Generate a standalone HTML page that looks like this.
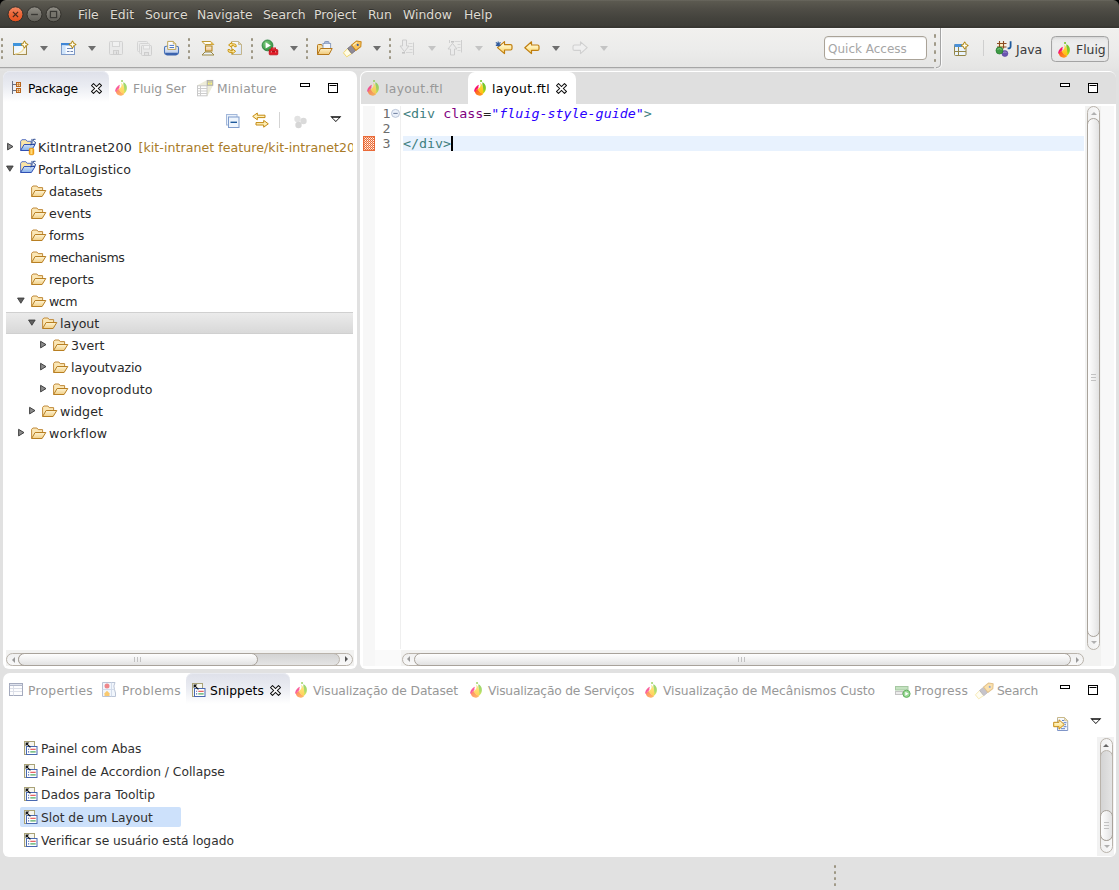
<!DOCTYPE html>
<html lang="en">
<head>
<meta charset="utf-8">
<title>Eclipse - layout.ftl</title>
<style>
html,body{margin:0;padding:0}
body{width:1119px;height:890px;overflow:hidden;position:relative;background:#e1e1e1;
  font-family:"DejaVu Sans","Liberation Sans",sans-serif;font-size:12.3px;color:#222;}
*{box-sizing:border-box}
.a{position:absolute;white-space:nowrap}
svg{position:absolute;overflow:visible}

/* ---------- title / menu bar ---------- */
#corner{left:0;top:0;width:1119px;height:10px;background:#000}
#title{left:0;top:0;width:1119px;height:28px;border-radius:6px 6px 0 0;
  background:linear-gradient(#6b6960 0,#5b5950 1.500px,#4f4d46 9px,#44433d 18px,#3e3d38 26px,#34332e 27px,#3a3934 28px)}
#title .m{top:7px;color:#dfdbd2;font-size:12.4px;line-height:16px;text-shadow:0 -1px 0 rgba(0,0,0,.35)}
.wb{top:6.500px;width:16px;height:16px;border-radius:50%;border:1px solid #33312c;box-shadow:0 1px 0 rgba(255,255,255,.08)}

/* ---------- tool bar ---------- */
#tb{left:0;top:28px;width:1119px;height:43px;background:linear-gradient(#fafafa 0,#f1f0ee 1.500px,#ececeb 50%,#e5e5e4 92%,#e2e2e2)}
#tbline{left:0;top:67px;width:934px;height:2px;background:linear-gradient(#a6a6a6 0,#a6a6a6 50%,#d6d6d6 50%,#d6d6d6 100%)}
.sep{width:2px;height:22px;top:37.500px;background:repeating-linear-gradient(#b8b3a7 0,#99937f 1.5px,#b0aa9d 3px,transparent 3.2px,transparent 6.1px)}
.dd{width:0;height:0;border-left:4px solid transparent;border-right:4px solid transparent;border-top:5px solid #6e6e6e;top:46px}
.dd.dis{border-top-color:#c4c4c4}

/* ---------- panels ---------- */
.panel{background:#fff;border-radius:7px 7px 6px 6px}
.tab{font-size:12.3px;line-height:16px;margin-top:1px;color:#989898}
.tab.act{color:#000}
.ui{font-size:12.25px;line-height:16px;margin-top:1px;color:#303030}
.tree{font-size:12.6px;line-height:16px;margin-top:1px;color:#2a2a2a}
.code{font-family:"DejaVu Sans Mono","Liberation Mono",monospace;font-size:13.33px;line-height:15px;transform:scaleY(.9);transform-origin:0 12.100px}

/* tree + misc */
.tw{width:9px;height:10px}
.fo{width:16px;height:14px}
.sbtrack{background:#f2f2f1}
.sbh{border:1px solid #b9b3ab;border-radius:7px;background:linear-gradient(#f1f1f1,#f8f8f8)}
.sbthumb{border:1px solid #a8a29a;border-radius:7px;background:linear-gradient(#fefefe,#f1f1f1 50%,#e2e2e2)}
.sbv{border:1px solid #b9b3ab;border-radius:7px;background:linear-gradient(90deg,#f1f1f1,#f8f8f8)}
.sbthumbv{border:1px solid #a8a29a;border-radius:7px;background:linear-gradient(90deg,#fefefe,#f1f1f1 50%,#e2e2e2)}
.grip-h{width:7px;height:5px;background:repeating-linear-gradient(90deg,#c2c2c2 0,#c2c2c2 1px,transparent 1px,transparent 3px)}
.grip-v{width:5px;height:7px;background:repeating-linear-gradient(#c2c2c2 0,#c2c2c2 1px,transparent 1px,transparent 3px)}
.arl{width:0;height:0;border-top:3px solid transparent;border-bottom:3px solid transparent;border-right:3.500px solid #9a9a9a}
.arr{width:0;height:0;border-top:3px solid transparent;border-bottom:3px solid transparent;border-left:3.500px solid #9a9a9a}
.aru{width:0;height:0;border-left:3px solid transparent;border-right:3px solid transparent;border-bottom:3.500px solid #b0b0b0}
.ard{width:0;height:0;border-left:3px solid transparent;border-right:3px solid transparent;border-top:3.500px solid #b0b0b0}
.trh{border:1px solid #b9b3ab;border-radius:7px;background:linear-gradient(#d4d4d4,#e4e4e4)}
.trv{border:1px solid #b9b3ab;border-radius:7px;background:linear-gradient(90deg,#d4d4d4,#e4e4e4)}
.dk.arr{border-left-color:#555}.dk.aru{border-bottom-color:#666}
</style>
</head>
<body>

<svg width="0" height="0" style="left:0;top:0">
  <symbol id="closex" viewBox="0 0 11 11">
    <path d="M.6 2.500L2.500.6l3 3 3-3 1.900 1.900-3 3 3 3-1.900 1.900-3-3-3 3L.6 8.500l3-3z" fill="#fff" stroke="#111" stroke-width="1.050" stroke-linejoin="miter"/>
  </symbol>
  <symbol id="twc" viewBox="0 0 9 10"><path d="M.6 1.300L6 4.600.6 7.900z" fill="#8c8c8c" stroke="#333" stroke-width=".9" stroke-linejoin="round"/></symbol>
  <symbol id="two" viewBox="0 0 10 9"><path d="M.6 1.200h7.400L4.300 7z" fill="#606060" stroke="#333" stroke-width=".9" stroke-linejoin="round"/></symbol>
  <symbol id="fold" viewBox="0 0 16 14">
    <linearGradient id="gF2" x1="0" y1="0" x2="0" y2="1"><stop offset="0" stop-color="#fef4d4"/><stop offset="1" stop-color="#f1cf86"/></linearGradient>
    <path d="M.6 12.400V3.300L1.900 2h4l1.300 1.600h4.400v3" fill="#fbe7b6" stroke="#c08a3a" stroke-width="1" stroke-linejoin="round"/>
    <path d="M.6 12.500l3.500-6h10.700l-3.700 6z" fill="url(#gF2)" stroke="#b87f22" stroke-width="1" stroke-linejoin="round"/>
  </symbol>
  <symbol id="prj" viewBox="0 0 18 18">
    <linearGradient id="gPj" x1="0" y1="0" x2="0" y2="1"><stop offset="0" stop-color="#cfe0f8"/><stop offset="1" stop-color="#86b0e8"/></linearGradient>
    <path d="M1.600 12.400V3.300L2.900 1.700h4l1.300 1.600h3.900v3.200" fill="#fbe5a6" stroke="#5a74c4" stroke-width="1" stroke-linejoin="round"/>
    <path d="M1.600 12.500l3.500-6h11l-3.700 6z" fill="url(#gPj)" stroke="#3050b4" stroke-width="1" stroke-linejoin="round"/>
    <path d="M13 .9v4.600q0 1.500-1.500 1.500" fill="none" stroke="#1f3f8a" stroke-width="1"/>
    <path d="M16.500 1.400q-2.400-.8-2.400.8 0 .9 1.200 1.300 1.300.4 1.200 1.600-.2 1.500-2.500 1" fill="none" stroke="#1f3f8a" stroke-width=".95"/>
  </symbol>
  <symbol id="prjK" viewBox="0 0 18 18">
    <use href="#prj"/>
    <linearGradient id="gCy" x1="0" y1="0" x2="1" y2="0"><stop offset="0" stop-color="#f59a00"/><stop offset=".45" stop-color="#ffe08a"/><stop offset="1" stop-color="#f59a00"/></linearGradient>
    <rect x="10.300" y="10.300" width="4.400" height="6.400" rx="1.200" fill="url(#gCy)" stroke="#e58f00" stroke-width=".9"/>
  </symbol>
  <symbol id="snip" viewBox="0 0 14 14">
    <rect x=".5" y=".5" width="10" height="13" fill="#f6f6ee" stroke="#a9a277" stroke-width="1"/>
    <rect x="2.500" y="5.500" width="10.500" height="8" fill="#fff" stroke="#4868b0" stroke-width="1"/>
    <path d="M6.300 8.300h5.400" stroke="#e0484a" stroke-width="1.100"/>
    <path d="M6.300 10.900h5.400" stroke="#38a04c" stroke-width="1.100"/>
    <path d="M4 8.300h1.200M4 10.900h1.200" stroke="#4868b0" stroke-width="1.100"/>
    <path d="M2.800 2.800l3.600 3.600" stroke="#111" stroke-width="1.150"/>
    <path d="M1.600 1.600h3.700l-3.700 3.700z" fill="#111"/>
  </symbol>
  <symbol id="fluig" viewBox="0 0 12 16">
    <linearGradient id="fgO" x1="0" y1="0" x2="1" y2="1"><stop offset="0" stop-color="#ff4a24"/><stop offset="1" stop-color="#ffa81c"/></linearGradient>
    <linearGradient id="fgG" x1="0" y1="0" x2="0" y2="1"><stop offset="0" stop-color="#6cc22c"/><stop offset=".6" stop-color="#86cc24"/><stop offset="1" stop-color="#d6e400"/></linearGradient>
    <linearGradient id="fgY" x1="0" y1="0" x2="0" y2="1"><stop offset="0" stop-color="#ffdc50"/><stop offset="1" stop-color="#ffbe0a"/></linearGradient>
    <path d="M8.300 2.200C10.500 3 12 5.300 11.900 8 11.800 10.800 10.600 12.700 8.800 13.900 8.600 11.600 8.600 9.400 8.500 7.400 8.400 5.600 8.400 3.600 8.300 2.200z" fill="url(#fgG)"/>
    <path d="M.8 11.300C2 10 3.200 9.300 4 9 4.800 11 6.600 13 9 13.600 9.200 14.500 8.300 15.400 6.200 15.700 3.300 15.900.9 14 .8 11.300z" fill="url(#fgO)"/>
    <path d="M5.800 2.600C7.500 3.800 8.800 5.600 9.100 8 9.400 10 9.400 12 9 13.800 6.400 13.300 4.300 11 3.800 9.100 4.700 8.300 6.500 7.200 6.600 5.200 6.600 4.200 6.200 3.400 5.800 2.600z" fill="url(#fgY)"/>
    <path d="M5 4.800C3 5.500.4 8 .1 11 .2 11.700.8 12 1.200 11.600 2.200 10 3.400 9 4.400 8 4.200 7 4.400 5.800 5 4.800z" fill="#f8126c"/>
    <circle cx="7.050" cy="1.050" r="1.050" fill="#76c428"/>
  </symbol>
</svg>
<!-- ================= TITLE BAR ================= -->
<div class="a" id="corner"></div>
<div class="a" id="title">
  <svg style="left:0;top:0" width="70" height="28" viewBox="0 0 70 28">
    <defs>
      <linearGradient id="wbR" x1="0" y1="0" x2="0" y2="1"><stop offset="0" stop-color="#f28c68"/><stop offset=".5" stop-color="#ec6536"/><stop offset="1" stop-color="#e5501e"/></linearGradient>
      <linearGradient id="wbG" x1="0" y1="0" x2="0" y2="1"><stop offset="0" stop-color="#918f87"/><stop offset=".5" stop-color="#77756e"/><stop offset="1" stop-color="#5f5e57"/></linearGradient>
    </defs>
    <circle cx="15.500" cy="14.300" r="7.500" fill="url(#wbR)" stroke="#33312c" stroke-width="1"/>
    <circle cx="34.500" cy="14.300" r="7.500" fill="url(#wbG)" stroke="#33312c" stroke-width="1"/>
    <circle cx="53.500" cy="14.300" r="7.500" fill="url(#wbG)" stroke="#33312c" stroke-width="1"/>
    <path d="M12.900 11.800l5.200 5.200M18.100 11.800l-5.200 5.200" stroke="#4a2a1c" stroke-width="1.150" fill="none"/>
    <path d="M31.100 14.500h6.800" stroke="#3a3935" stroke-width="1.350" fill="none"/>
    <rect x="50.400" y="11.400" width="6.200" height="6.200" stroke="#3a3935" stroke-width="1.250" fill="#77756d"/>
  </svg>
  <span class="a m" style="left:78px">File</span>
  <span class="a m" style="left:110px">Edit</span>
  <span class="a m" style="left:145px">Source</span>
  <span class="a m" style="left:197px">Navigate</span>
  <span class="a m" style="left:263px">Search</span>
  <span class="a m" style="left:314px">Project</span>
  <span class="a m" style="left:368px">Run</span>
  <span class="a m" style="left:403px">Window</span>
  <span class="a m" style="left:464px">Help</span>
</div>

<!-- ================= TOOL BAR ================= -->
<div class="a" id="tb"></div>
<div class="a" id="tbline"></div>
<!--TB-START-->
<!-- grip -->
<div class="a sep" style="left:1px"></div>
<!-- New -->
<svg style="left:12px;top:40px" width="16" height="16" viewBox="0 0 16 16">
  <defs>
    <linearGradient id="gWin" x1="0" y1="0" x2="1" y2="1"><stop offset="0" stop-color="#e4f1fd"/><stop offset=".6" stop-color="#f7fbff"/><stop offset="1" stop-color="#f4e9c6"/></linearGradient>
    <linearGradient id="gGold" x1="0" y1="0" x2="0" y2="1"><stop offset="0" stop-color="#fffdf0"/><stop offset=".45" stop-color="#fff0b4"/><stop offset="1" stop-color="#fbcf5c"/></linearGradient>
    <linearGradient id="gFold" x1="0" y1="0" x2="0" y2="1"><stop offset="0" stop-color="#fdf0c8"/><stop offset="1" stop-color="#f0c878"/></linearGradient>
    <linearGradient id="gPage" x1="0" y1="0" x2="1" y2="1"><stop offset="0" stop-color="#ffffff"/><stop offset="1" stop-color="#d6e2f3"/></linearGradient>
    <radialGradient id="gRun" cx=".4" cy=".35" r=".7"><stop offset="0" stop-color="#7fd07f"/><stop offset="1" stop-color="#2c8a3a"/></radialGradient>
    <radialGradient id="gFl" cx=".5" cy=".7" r=".7"><stop offset="0" stop-color="#ffe14a"/><stop offset=".5" stop-color="#f9a13a"/><stop offset="1" stop-color="#f0508a"/></radialGradient>
  </defs>
  <rect x="1.500" y="3.500" width="13" height="11" fill="url(#gWin)" stroke="#a38c4e"/>
  <rect x="1" y="3" width="9" height="3" fill="#3f94dc"/>
  <path d="M3 14c5-.4 8.6-3 9.4-7.5" stroke="#f0dc9c" stroke-width="1.4" fill="none"/>
  <path d="M12.500 1.200q.9 2.400 3.300 3.300-2.400.9-3.300 3.300-.9-2.400-3.300-3.300 2.400-.9 3.300-3.300z" fill="#c9a02c" stroke="#b48a18" stroke-width="1.300" stroke-linejoin="round"/><path d="M12.500 2.300v4.400M10.300 4.500h4.400" stroke="#fffdf0" stroke-width="1.300"/>
</svg>
<div class="a dd" style="left:40px"></div>
<!-- New wizard 2 -->
<svg style="left:60px;top:40px" width="16" height="16" viewBox="0 0 16 16">
  <rect x="1.500" y="3.500" width="13" height="11" fill="#f6faff" stroke="#7f9bc8"/>
  <rect x="1" y="3" width="14" height="2.400" fill="#3f86d6"/>
  <rect x="2" y="5.400" width="3.600" height="8.600" fill="#cfe4fa"/>
  <path d="M7 8.500h6M7 11.500h2.500M10.500 11.500h2.500" stroke="#6f86b4" stroke-width="1.200"/>
  <path d="M12.500 1.200q.9 2.400 3.300 3.300-2.400.9-3.300 3.300-.9-2.400-3.300-3.300 2.400-.9 3.300-3.300z" fill="#c9a02c" stroke="#b48a18" stroke-width="1.300" stroke-linejoin="round"/><path d="M12.500 2.300v4.400M10.300 4.500h4.400" stroke="#fffdf0" stroke-width="1.300"/>
</svg>
<div class="a dd" style="left:88px"></div>
<!-- Save (disabled) -->
<svg style="left:108px;top:40px" width="16" height="16" viewBox="0 0 16 16" opacity=".9">
  <path d="M2.500 1.500h11q1 0 1 1v11q0 1-1 1h-11q-1 0-1-1v-11q0-1 1-1z" fill="#eaeaea" stroke="#cfcfcf"/>
  <rect x="4.500" y="1.500" width="7" height="5" fill="#f2f2f2" stroke="#d4d4d4"/>
  <rect x="5.500" y="10.500" width="5" height="4" fill="#e2e2e2" stroke="#cccccc"/>
  <path d="M8.500 11.500v2.500" stroke="#c6c6c6"/>
</svg>
<!-- Save all (disabled) -->
<svg style="left:136px;top:40px" width="16" height="16" viewBox="0 0 16 16" opacity=".9">
  <rect x="1.500" y="1.500" width="10" height="10" rx="1" fill="#ececec" stroke="#d2d2d2"/>
  <rect x="3.500" y="3.500" width="10" height="10" rx="1" fill="#ececec" stroke="#d2d2d2"/>
  <rect x="5.500" y="5.500" width="10" height="10" rx="1" fill="#e9e9e9" stroke="#cdcdcd"/>
  <rect x="7.500" y="5.500" width="6" height="3.500" fill="#f2f2f2" stroke="#d6d6d6"/>
  <rect x="8.500" y="12.500" width="4" height="3" fill="#e0e0e0" stroke="#cacaca"/>
</svg>
<!-- Print -->
<svg style="left:163px;top:40px" width="17" height="16" viewBox="0 0 17 16">
  <defs><linearGradient id="gPr" x1="0" y1="0" x2="0" y2="1"><stop offset="0" stop-color="#eef2fa"/><stop offset="1" stop-color="#b4c6e6"/></linearGradient></defs>
  <rect x="1.500" y="6.300" width="14" height="8" rx="1.800" fill="url(#gPr)" stroke="#4a74ba" stroke-width="1.100"/>
  <path d="M2.200 12.800h12.600v.6q0 2.100-2.100 2.100h-8.400q-2.100 0-2.100-2.100z" fill="#3b63ae"/>
  <path d="M4.700 9.400v-8h5.600l2.500 2.400v5.600z" fill="#fcfcfd" stroke="#bda458" stroke-width="1"/>
  <path d="M10.300 1.400v2.400h2.500" fill="#f0e4bc" stroke="#bda458" stroke-width=".8"/>
  <path d="M6.500 5.400h4.600M6.500 7.500h4.600" stroke="#4a78c8" stroke-width="1"/>
</svg>
<div class="a sep" style="left:188px"></div>
<!-- toggle block selection-ish icon -->
<svg style="left:201px;top:40px" width="14" height="16" viewBox="0 0 14 16">
  <defs><linearGradient id="gOr" x1="0" y1="0" x2="0" y2="1"><stop offset="0" stop-color="#fff3e0"/><stop offset="1" stop-color="#ecc08a"/></linearGradient></defs>
  <path d="M1 1.500h8.800l3 3h-8.800z" fill="#fffdf4" stroke="#c09a34" stroke-width="1"/>
  <path d="M9.800 1.500v3h3z" fill="#e3b64c"/>
  <path d="M4.500 4.600v1.400M4.500 11.200v.8" stroke="#d8c48c" stroke-width="1"/>
  <rect x="4.500" y="6" width="6.500" height="5" fill="url(#gOr)" stroke="#b58a28" stroke-width="1.100"/>
  <path d="M4 12l-3 3h12l-3-3z" fill="#eaf2fc" stroke="#9a8740" stroke-width="1"/>
</svg>
<!-- refresh page icon -->
<svg style="left:227px;top:40px" width="16" height="16" viewBox="0 0 16 16">
  <path d="M4.500 1.500h7l3 3v10h-10z" fill="url(#gPage)" stroke="#c3b48a" stroke-width="1"/>
  <path d="M11.500 1.500v3h3z" fill="#ead9a4" stroke="#c3b48a" stroke-width=".8"/>
  <path d="M1.600 5l3.200-2.600v1.500h2.400q2 0 2 2v.8h-1.900v-.4q0-.7-.7-.7h-1.800v1.800z" fill="#ffe9a0" stroke="#c8940f" stroke-width="1" stroke-linejoin="round"/>
  <path d="M8.600 11.300l-3.200 2.600v-1.500h-2.400q-2 0-2-2v-.8h1.900v.4q0 .7.700.7h1.800v-1.800z" fill="#ffe9a0" stroke="#c8940f" stroke-width="1" stroke-linejoin="round"/>
</svg>
<div class="a sep" style="left:251px"></div>
<!-- Run external tools -->
<svg style="left:261px;top:39px" width="18" height="17" viewBox="0 0 18 17">
  <circle cx="6.500" cy="6.400" r="5.400" fill="url(#gRun)" stroke="#2a8340" stroke-width=".9"/>
  <path d="M4.600 3.200l5.200 3.200-5.200 3.200z" fill="#fff"/>
  <rect x="8.200" y="10.600" width="8.600" height="5.200" rx=".8" fill="#e21a26" stroke="#c0101a" stroke-width=".8"/>
  <path d="M10.600 10.500v-1.400h3.800v1.400" fill="none" stroke="#d8141e" stroke-width="1.200"/>
  <path d="M8.400 12.600h8.200" stroke="#9a0c14" stroke-width=".8"/>
  <path d="M10.300 12v1.600M14.700 12v1.600" stroke="#ff9a9a" stroke-width=".9"/>
</svg>
<div class="a dd" style="left:290px"></div>
<div class="a sep" style="left:306px"></div>
<!-- Open type folder -->
<svg style="left:316px;top:40px" width="17" height="16" viewBox="0 0 17 16">
  <path d="M1.500 14.500v-9q0-1 1-1h3l1 1.500h6v2.500" fill="#f7dc9c" stroke="#b5771a"/>
  <rect x="7" y="3.500" width="7.600" height="6" fill="#f3f6fb" stroke="#8c9fc0"/>
  <path d="M8.600 3.400v-1.200q0-.7.700-.7h3q.7 0 .7.700v1.200" fill="#a9b9d8" stroke="#7f92b8" stroke-width=".9"/>
  <path d="M1.500 14.500l3-6h11.700l-3.200 6z" fill="url(#gFold)" stroke="#b5771a"/>
</svg>
<!-- Search flashlight -->
<svg style="left:344px;top:40px" width="18" height="16" viewBox="0 0 18 16">
  <g transform="translate(9.200 8.200) rotate(-39)">
    <path d="M-10.500-2.600L-4.500-3.200V3.200L-10.500 2.600z" fill="#fffce6" stroke="#f1d66a" stroke-width=".9"/>
    <rect x="-4.500" y="-3.300" width="5.200" height="6.600" fill="#8f8b98" stroke="#6f6b78" stroke-width=".8"/>
    <path d="M.7-3.500H7L10.200 0 7 3.500H.7z" fill="#f9c45e" stroke="#c8861a" stroke-width="1" stroke-linejoin="round"/>
    <path d="M1.500-2.200H6.800" stroke="#fdeab0" stroke-width="1.200"/>
    <circle cx="5.600" cy=".3" r="1.050" fill="#2f58a8"/>
  </g>
</svg>
<div class="a dd" style="left:373px"></div>
<div class="a sep" style="left:389px"></div>
<!-- Next annotation (disabled) -->
<svg style="left:399px;top:39px" width="16" height="17" viewBox="0 0 16 17">
  <path d="M14.500 3.500v12.500" stroke="#cfcfcf"/>
  <path d="M9.500 4.500h4M10.500 7.500h3M10.500 10.500h3M7 13.500h6.500" stroke="#d6d6d6"/>
  <path d="M3.500 1v6h-2.500l4.500 5.600 4.500-5.600h-2.500v-6z" fill="#ebebeb" stroke="#cdcdcd"/>
  <rect x="3" y="13" width="3" height="1.600" fill="#c4c4c4"/>
</svg>
<div class="a dd dis" style="left:428px"></div>
<!-- Prev annotation (disabled) -->
<svg style="left:447px;top:39px" width="16" height="17" viewBox="0 0 16 17">
  <path d="M2.500 1v3M14.500 1v12.500" stroke="#cfcfcf"/>
  <path d="M7.500 2.500h6M10.500 5.500h3M10.500 8.500h3M10.500 11.500h3" stroke="#d6d6d6"/>
  <rect x="4" y="2" width="3" height="1.600" fill="#c4c4c4"/>
  <path d="M3.500 16v-6h-2.500l4.500-5.600 4.500 5.600h-2.500v6z" fill="#ebebeb" stroke="#cdcdcd"/>
</svg>
<div class="a dd dis" style="left:475px"></div>
<!-- Last edit location -->
<svg style="left:495px;top:40px" width="18" height="16" viewBox="0 0 18 16">
  <path d="M9.500 1.600v3h6q1.500 0 1.500 1.500v2.400q0 1.500-1.500 1.500h-6v3.600l-7-6z" fill="url(#gGold)" stroke="#c07f10" stroke-width="1.200" stroke-linejoin="round"/>
  <path d="M3.200 1.400v5.200M.8 2.600l4.800 2.800M5.600 2.600l-4.800 2.800" stroke="#2f5a9c" stroke-width="1.100"/>
</svg>
<!-- Back -->
<svg style="left:524px;top:41px" width="16" height="14" viewBox="0 0 16 14">
  <path d="M7.500.8v3.200h6q1.500 0 1.500 1.500v2.400q0 1.500-1.500 1.500h-6v3.200l-6.700-5.900z" fill="url(#gGold)" stroke="#c07f10" stroke-width="1.200" stroke-linejoin="round"/>
</svg>
<div class="a dd" style="left:552px"></div>
<!-- Forward (disabled) -->
<svg style="left:572px;top:41px" width="16" height="14" viewBox="0 0 16 14">
  <path d="M8.500.8v3.200h-6q-1.500 0-1.500 1.500v2.400q0 1.500 1.500 1.500h6v3.200l6.700-5.900z" fill="#efefef" stroke="#d0d0d0" stroke-width="1.100" stroke-linejoin="round"/>
</svg>
<div class="a dd dis" style="left:600px"></div>

<!-- Quick Access -->
<div class="a" style="left:823.500px;top:36px;width:103.500px;height:24px;border:1px solid #aaa398;border-radius:4px;background:#fff;box-shadow:inset 0 1px 1px rgba(0,0,0,.08)"></div>
<span class="a" style="left:828px;top:41px;font-size:12px;line-height:16px;color:#a6a6a6">Quick Access</span>
<div class="a" style="left:934px;top:34px;width:2px;height:29px;background:repeating-linear-gradient(#b8b3a7 0,#99937f 1.700px,#b0aa9d 3.500px,transparent 3.700px,transparent 8.200px)"></div>
<svg style="left:930px;top:28px" width="14" height="42" viewBox="0 0 14 42"><path d="M11.500 0v36.500q0 3.500-3.500 3.500h-1" fill="none" stroke="#fbfbfb" stroke-width="1"/><path d="M10.500 0v36q0 3.500-3.500 3.500h-1" fill="none" stroke="#a4a4a4" stroke-width="1"/></svg>
<!-- Open perspective -->
<svg style="left:953px;top:41px" width="17" height="16" viewBox="0 0 17 16">
  <rect x="1.500" y="3.500" width="11.500" height="11" rx="1" fill="#eaf4fd" stroke="#948548"/>
  <rect x="1.500" y="3" width="8" height="3" fill="#4a90d8"/>
  <path d="M5.500 6v8.500M1.500 10.500h11.500" stroke="#948548" stroke-width="1"/>
  <path d="M11.700 1.200q.9 2.400 3.300 3.300-2.400.9-3.300 3.300-.9-2.400-3.300-3.300 2.400-.9 3.300-3.300z" fill="#c9a02c" stroke="#b48a18" stroke-width="1.300" stroke-linejoin="round"/><path d="M11.700 2.300v4.400M9.500 4.500h4.400" stroke="#fffdf0" stroke-width="1.300"/>
</svg>
<div class="a" style="left:983px;top:40px;width:1px;height:16px;background:#cfcfcf"></div>
<!-- Java perspective -->
<svg style="left:995px;top:40px" width="18" height="17" viewBox="0 0 18 17">
  <rect x="3.500" y="2.500" width="6" height="5.500" fill="#fff0c0"/>
  <path d="M2 3.500h9.500M2 7h9.500M4.500 1v7.500M8.500 1v7.500" stroke="#8c4a22" stroke-width="1.100" fill="none"/>
  <circle cx="9.900" cy="13.500" r="3" fill="#6a55b0" stroke="#5440a0" stroke-width=".6"/>
  <path d="M8 12.500q2-1 3.600 0" stroke="#9a8ad0" stroke-width=".9" fill="none"/>
  <circle cx="4.500" cy="10.500" r="3.500" fill="#3f9a45" stroke="#1f7a2c" stroke-width=".7"/>
  <path d="M2.400 9.300q2.100-1.300 4.200 0" stroke="#8fd08f" stroke-width="1" fill="none"/>
  <path d="M15.600 1.200v5q0 2.200-2.200 2.200h-.8" fill="none" stroke="#1f5a9c" stroke-width="1.800"/>
</svg>
<span class="a" style="left:1016px;top:41.500px;font-size:12.4px;line-height:16px;color:#3a3a3a">Java</span>
<!-- Fluig button -->
<div class="a" style="left:1050.500px;top:36px;width:58.500px;height:25.500px;border:1px solid #a3a3a3;border-radius:4.500px;background:linear-gradient(#e6e6e6,#ededed 30%,#e7e7e7);box-shadow:inset 0 1px 2px rgba(0,0,0,.08)"></div>
<svg style="left:1058px;top:42px" width="12" height="16" viewBox="0 0 12 16"><use href="#fluig"/></svg>
<span class="a" style="left:1076px;top:42px;font-size:12.4px;line-height:16px;color:#3a3a3a">Fluig</span>
<!--TB-END-->

<!-- ================= LEFT PANEL ================= -->
<div class="a panel" id="left" style="left:3px;top:71px;width:354px;height:598px"></div>
<!--LEFT-START-->
<!-- active tab: Package -->
<div class="a" style="left:3px;top:71px;width:106px;height:33px;border-radius:7px 7px 0 0;background:linear-gradient(#dee0e9,#eaecf2 45%,#fff 94%);box-shadow:inset 0 1px 0 #e9ebf1"></div>
<svg style="left:11px;top:81px" width="11" height="13" viewBox="0 0 11 13">
  <path d="M1.500 0v13M1.500 3.500h4M1.500 9.500h4" stroke="#6b7182" stroke-width="1"/>
  <rect x="5" y="1" width="5" height="5" fill="#b8641c"/>
  <rect x="5" y="7" width="5" height="5" fill="#b8641c"/>
  <path d="M6 2h1.200v1.200h-1.200zM7.800 2h1.200v1.200h-1.200zM6 3.800h1.200v1.200h-1.200zM7.800 3.800h1.200v1.200h-1.200zM6 8h1.200v1.200h-1.200zM7.800 8h1.200v1.200h-1.200zM6 9.800h1.200v1.200h-1.200zM7.800 9.800h1.200v1.200h-1.200z" fill="#f6dcae"/>
</svg>
<span class="a tab act" style="left:28px;top:80px;letter-spacing:-0.14px">Package</span>
<svg class="x" style="left:91px;top:83px" width="11" height="11" viewBox="0 0 11 11"><use href="#closex"/></svg>
<svg style="left:115px;top:80px" width="12" height="16" viewBox="0 0 12 16" opacity=".68"><use href="#fluig"/></svg>
<span class="a tab" style="left:133px;top:80px;letter-spacing:-0.10px">Fluig Ser</span>
<svg style="left:196px;top:79px" width="18" height="18" viewBox="0 0 18 18">
  <path d="M11 1L1 6.500 11.400 17 17 6.500z" fill="#edecd9"/>
  <rect x="1.500" y="6.800" width="9.500" height="10" fill="#fff" stroke="#c8c8c8" stroke-width="1"/>
  <path d="M1.500 9.500h9.500M1.500 12h9.500M1.500 14.500h9.500M4.500 7v10" stroke="#cdcdcd" stroke-width="1"/>
  <rect x="11.300" y="1.500" width="5.400" height="4.700" fill="#f8f27a" stroke="#adadad" stroke-width="1.100"/>
  <path d="M11.300 3h5.400" stroke="#b4b4b4" stroke-width="1.100"/>
  <path d="M14 1.500v4.700" stroke="#c9c9b0" stroke-width=".9"/>
</svg>
<span class="a tab" style="left:217px;top:80px;letter-spacing:0.24px">Miniature</span>
<svg style="left:300px;top:83px" width="10" height="4" viewBox="0 0 10 4"><rect x=".5" y=".5" width="9" height="3" fill="#fff" stroke="#000" stroke-width="1"/></svg>
<svg style="left:328px;top:83px" width="10" height="10" viewBox="0 0 10 10"><rect x=".5" y=".5" width="9" height="9" fill="#fff" stroke="#000" stroke-width="1"/><path d="M1.500 2.500h7" stroke="#000" stroke-width="1"/></svg>

<!-- view toolbar -->
<svg style="left:226px;top:114px" width="14" height="14" viewBox="0 0 14 14">
  <rect x=".5" y=".5" width="10.500" height="10.500" fill="#e9f1fb" stroke="#a3b8da"/>
  <rect x="2.500" y="3" width="10.500" height="10.500" fill="#eef5fd" stroke="#7f9ccc"/>
  <path d="M4.500 8.300h6.500" stroke="#1f5a9c" stroke-width="1.400"/>
</svg>
<svg style="left:252px;top:112px" width="17" height="17" viewBox="0 0 17 17">
  <path d="M5.300 1v2.200h7.700v2.400h-7.700v2.200l-4.600-3.400z" fill="#fff0b8" stroke="#c48a12" stroke-width="1" stroke-linejoin="round"/>
  <path d="M11.700 8.400v2.200h-7.700v2.400h7.700v2.200l4.600-3.400z" fill="#fff0b8" stroke="#c48a12" stroke-width="1" stroke-linejoin="round"/>
</svg>
<div class="a" style="left:279px;top:112px;width:1px;height:16px;background:#d4d4d4"></div>
<svg style="left:293px;top:115px" width="15" height="14" viewBox="0 0 15 14">
  <circle cx="4.500" cy="4" r="3.200" fill="#e2e2e2"/>
  <circle cx="10.500" cy="6" r="3.200" fill="#dadada"/>
  <circle cx="5.500" cy="10" r="3.200" fill="#d6d6d6"/>
</svg>
<svg style="left:330px;top:116px" width="12" height="7" viewBox="0 0 12 7"><path d="M.2.200h11.200l-5.600 5.700z" fill="#0a0a0a"/><path d="M2.500 1.700h6.600l-3.300 3.200z" fill="#fff"/></svg>

<!-- tree -->
<div class="a" style="left:6px;top:312px;width:347px;height:22px;background:linear-gradient(#ebebeb,#d8d8d8);border-top:1px solid #d0d0d0;border-bottom:1px solid #d0d0d0"></div>
<div id="tree">
<svg class="tw c" style="left:7px;top:142px"><use href="#twc"/></svg>
<svg class="ic" style="left:19px;top:138px" width="18" height="18" viewBox="0 0 18 18"><use href="#prjK"/></svg>
<span class="a tree" style="left:38px;top:139px;width:315px;overflow:hidden"><span style="letter-spacing:.22px">KitIntranet200</span> <span style="color:#a97b28;margin-left:2.500px;letter-spacing:.04px">[kit-intranet feature/kit-intranet20</span></span>

<svg class="tw o" style="left:6px;top:164px"><use href="#two"/></svg>
<svg class="ic" style="left:19px;top:160px" width="18" height="18" viewBox="0 0 18 18"><use href="#prj"/></svg>
<span class="a tree" style="left:38px;top:161px;letter-spacing:.09px">PortalLogistico</span>

<svg class="fo" style="left:31px;top:184px"><use href="#fold"/></svg>
<span class="a tree" style="left:49px;top:183px;letter-spacing:-0.09px">datasets</span>
<svg class="fo" style="left:31px;top:206px"><use href="#fold"/></svg>
<span class="a tree" style="left:49px;top:205px">events</span>
<svg class="fo" style="left:31px;top:228px"><use href="#fold"/></svg>
<span class="a tree" style="left:49px;top:227px;letter-spacing:-0.18px">forms</span>
<svg class="fo" style="left:31px;top:250px"><use href="#fold"/></svg>
<span class="a tree" style="left:49px;top:249px;letter-spacing:-0.40px">mechanisms</span>
<svg class="fo" style="left:31px;top:272px"><use href="#fold"/></svg>
<span class="a tree" style="left:49px;top:271px">reports</span>

<svg class="tw o" style="left:17px;top:296px"><use href="#two"/></svg>
<svg class="fo" style="left:31px;top:294px"><use href="#fold"/></svg>
<span class="a tree" style="left:49px;top:293px;letter-spacing:-0.50px">wcm</span>

<svg class="tw o" style="left:28px;top:318px"><use href="#two"/></svg>
<svg class="fo" style="left:42px;top:316px"><use href="#fold"/></svg>
<span class="a tree" style="left:60px;top:315px">layout</span>

<svg class="tw c" style="left:40px;top:340px"><use href="#twc"/></svg>
<svg class="fo" style="left:53px;top:338px"><use href="#fold"/></svg>
<span class="a tree" style="left:71px;top:337px">3vert</span>
<svg class="tw c" style="left:40px;top:362px"><use href="#twc"/></svg>
<svg class="fo" style="left:53px;top:360px"><use href="#fold"/></svg>
<span class="a tree" style="left:71px;top:359px;letter-spacing:-0.12px">layoutvazio</span>
<svg class="tw c" style="left:40px;top:384px"><use href="#twc"/></svg>
<svg class="fo" style="left:53px;top:382px"><use href="#fold"/></svg>
<span class="a tree" style="left:71px;top:381px;letter-spacing:0.15px">novoproduto</span>

<svg class="tw c" style="left:29px;top:406px"><use href="#twc"/></svg>
<svg class="fo" style="left:42px;top:404px"><use href="#fold"/></svg>
<span class="a tree" style="left:60px;top:403px;letter-spacing:0.10px">widget</span>
<svg class="tw c" style="left:18px;top:428px"><use href="#twc"/></svg>
<svg class="fo" style="left:31px;top:426px"><use href="#fold"/></svg>
<span class="a tree" style="left:49px;top:425px;letter-spacing:0.25px">workflow</span>
</div>

<!-- left h-scrollbar -->
<div class="a sbtrack" style="left:6px;top:650px;width:348px;height:16px"></div>
<div class="a sbh" style="left:6px;top:653px;width:347px;height:13px"></div>
<div class="a trh" style="left:18px;top:653px;width:322px;height:13px"></div>
<div class="a sbthumb" style="left:18px;top:653px;width:240px;height:13px"></div>
<div class="a grip-h" style="left:134px;top:657px"></div>
<div class="a arl" style="left:11.800px;top:656.500px"></div>
<div class="a arr dk" style="left:345.200px;top:656.300px"></div>
<!--LEFT-END-->

<!-- ================= EDITOR PANEL ================= -->
<div class="a panel" id="editor" style="left:360px;top:71px;width:756px;height:598px"></div>
<!--EDITOR-CONTENT-S-->
<!-- header -->
<div class="a" style="left:361px;top:72px;width:755px;height:32px;border-radius:6px 6px 0 0;background:#dfdfdf"></div>
<svg style="left:367px;top:80px" width="12" height="16" viewBox="0 0 12 16" opacity=".68"><use href="#fluig"/></svg>
<span class="a tab" style="left:385px;top:80px;letter-spacing:0.34px">layout.ftl</span>
<div class="a" style="left:468px;top:72px;width:108px;height:32px;border-radius:7px 7px 0 0;background:#fff"></div>
<svg style="left:474px;top:80px" width="12" height="16" viewBox="0 0 12 16"><use href="#fluig"/></svg>
<span class="a tab act" style="left:492px;top:80px;letter-spacing:0.34px">layout.ftl</span>
<svg style="left:556px;top:83px" width="11" height="11" viewBox="0 0 11 11"><use href="#closex"/></svg>
<svg style="left:1060px;top:83px" width="10" height="4" viewBox="0 0 10 4"><rect x=".5" y=".5" width="9" height="3" fill="#fff" stroke="#000" stroke-width="1"/></svg>
<svg style="left:1088px;top:83px" width="10" height="10" viewBox="0 0 10 10"><rect x=".5" y=".5" width="9" height="9" fill="#fff" stroke="#000" stroke-width="1"/><path d="M1.500 2.500h7" stroke="#000" stroke-width="1"/></svg>

<!-- rulers -->
<div class="a" style="left:363px;top:106px;width:12px;height:560px;background:#f7f7f7"></div>
<div class="a" style="left:400px;top:106px;width:1px;height:543px;background:#efefef"></div>
<div class="a" style="left:1085px;top:106px;width:16px;height:560px;background:#f2f2f1"></div>
<div class="a" style="left:1101px;top:106px;width:13px;height:560px;background:#f8f8f8"></div>
<div class="a" style="left:375px;top:650px;width:26px;height:16px;background:#fafafa"></div>

<!-- current line -->
<div class="a" style="left:403px;top:136px;width:681px;height:15px;background:#e8f2fe"></div>
<!-- marker -->
<svg style="left:363px;top:136px" width="12" height="15" viewBox="0 0 12 15"><defs><pattern id="hatch" width="2" height="2" patternUnits="userSpaceOnUse"><rect width="2" height="2" fill="#ea6a38"/><rect x="0" y="0" width="1" height="1" fill="#fff5ee"/><rect x="1" y="1" width="1" height="1" fill="#f8c4a8"/></pattern></defs><rect width="12" height="15" fill="#ea6a38"/><rect x="1" y="1" width="10" height="13" fill="url(#hatch)"/></svg>

<!-- code -->
<span class="a code" style="left:382.500px;top:106px;color:#6c6c6c">1</span>
<svg style="left:391px;top:109px" width="9" height="9" viewBox="0 0 9 9"><circle cx="4.500" cy="4.400" r="4" fill="#eaf0f9" stroke="#b4c0d4" stroke-width=".9"/><path d="M2.300 4.400h4.400" stroke="#6d7d9c" stroke-width="1"/></svg>
<span class="a code" style="left:403px;top:106px"><span style="color:#3f7f7f">&lt;div</span> <span style="color:#7f007f">class</span><span style="color:#222">=</span><span style="color:#2a00ff;font-style:italic">"fluig-style-guide"</span><span style="color:#3f7f7f">&gt;</span></span>
<span class="a code" style="left:382.500px;top:121px;color:#6c6c6c">2</span>
<span class="a code" style="left:382.500px;top:136px;color:#6c6c6c">3</span>
<span class="a code" style="left:403px;top:136px;color:#3f7f7f">&lt;/div&gt;</span>
<div class="a" style="left:451px;top:136px;width:2px;height:15px;background:#000"></div>

<!-- v scrollbar -->
<div class="a sbv" style="left:1087px;top:106px;width:13px;height:543.500px"></div>
<div class="a sbthumbv" style="left:1087px;top:118px;width:13px;height:518.500px"></div>
<div class="a aru" style="left:1090.600px;top:111.500px"></div>
<div class="a ard" style="left:1090.500px;top:641px"></div>
<div class="a grip-v" style="left:1091px;top:374px"></div>
<!-- h scrollbar -->
<div class="a sbtrack" style="left:401px;top:650px;width:684px;height:16px"></div>
<div class="a sbh" style="left:402px;top:653px;width:682px;height:13px"></div>
<div class="a sbthumb" style="left:414px;top:653px;width:657px;height:13px"></div>
<div class="a grip-h" style="left:738px;top:657px"></div>
<div class="a arl" style="left:407px;top:656.400px"></div>
<div class="a arr" style="left:1076px;top:656.500px"></div>
<!--EDITOR-CONTENT-E-->

<!-- ================= BOTTOM PANEL ================= -->
<div class="a panel" id="bottom" style="left:3px;top:673px;width:1113px;height:184px"></div>
<!--BOTTOM-CONTENT-S-->
<!-- tabs -->
<svg style="left:9px;top:683px" width="14" height="13" viewBox="0 0 14 13">
  <rect x=".5" y=".5" width="13" height="12" fill="#fdfdfe" stroke="#a4aabd"/>
  <path d="M.5 2.500h13" stroke="#b4bacb" stroke-width="1"/>
  <path d="M1 1.500h12" stroke="#dfe3ee" stroke-width="1"/>
  <path d="M1 5.500h12M1 8.500h12M4.500 3v9.500" stroke="#dcdfe8" stroke-width="1"/>
</svg>
<span class="a tab" style="left:28px;top:682px;letter-spacing:0.28px">Properties</span>
<svg style="left:102px;top:682px" width="15" height="15" viewBox="0 0 15 15" opacity=".8">
  <path d="M.5.500h12.500q-2 3.500-.5 7t1 7h-13z" fill="#eef4fc" stroke="#aab6cc"/>
  <path d="M.5 7.500h11.500M9.500 .5v14" stroke="#c4d0e4" stroke-width=".9"/>
  <circle cx="5" cy="4" r="2.500" fill="#ea6a6e"/>
  <path d="M2.500 14v-2.700l2.500-2.600 2.500 2.600v2.700z" fill="#f8bc4c"/>
</svg>
<span class="a tab" style="left:122px;top:682px;letter-spacing:0.29px">Problems</span>
<div class="a" style="left:186px;top:673px;width:104px;height:32.500px;border-radius:7px 7px 0 0;background:linear-gradient(#dee0e9,#eaecf2 45%,#fff 94%);box-shadow:inset 0 1px 0 #e9ebf1"></div>
<svg style="left:192px;top:683px" width="14" height="14" viewBox="0 0 14 14"><use href="#snip"/></svg>
<span class="a tab act" style="left:210px;top:682px;letter-spacing:0.07px">Snippets</span>
<svg style="left:270px;top:685px" width="11" height="11" viewBox="0 0 11 11"><use href="#closex"/></svg>
<svg style="left:295px;top:682px" width="12" height="16" viewBox="0 0 12 16" opacity=".68"><use href="#fluig"/></svg>
<span class="a tab" style="left:313px;top:682px;letter-spacing:-0.10px">Visualização de Dataset</span>
<svg style="left:470px;top:682px" width="12" height="16" viewBox="0 0 12 16" opacity=".68"><use href="#fluig"/></svg>
<span class="a tab" style="left:488px;top:682px;letter-spacing:-0.20px">Visualização de Serviços</span>
<svg style="left:645px;top:682px" width="12" height="16" viewBox="0 0 12 16" opacity=".68"><use href="#fluig"/></svg>
<span class="a tab" style="left:663px;top:682px;letter-spacing:-0.07px">Visualização de Mecânismos Custo</span>
<svg style="left:895px;top:685px" width="16" height="13" viewBox="0 0 16 13">
  <rect x=".5" y="1.500" width="12.500" height="3.500" fill="#c4e2c0" stroke="#a6c8a2"/>
  <rect x=".5" y="6.500" width="7" height="3" fill="#ececec" stroke="#c4c4c4"/>
  <circle cx="11.500" cy="8.800" r="3.600" fill="#9ad896" stroke="#62b25e"/>
  <path d="M10.300 6.800v4l3.300-2z" fill="#fff"/>
</svg>
<span class="a tab" style="left:914px;top:682px;letter-spacing:0.19px">Progress</span>
<svg style="left:976px;top:682px" width="18" height="16" viewBox="0 0 18 16" opacity=".5">
  <g transform="translate(9.200 8.200) rotate(-39)">
    <path d="M-10.500-2.600L-4.500-3.200V3.200L-10.500 2.600z" fill="#fffce6" stroke="#f1d66a" stroke-width=".9"/>
    <rect x="-4.500" y="-3.300" width="5.200" height="6.600" fill="#8f8b98" stroke="#6f6b78" stroke-width=".8"/>
    <path d="M.7-3.500H7L10.200 0 7 3.500H.7z" fill="#f9c45e" stroke="#c8861a" stroke-width="1" stroke-linejoin="round"/>
    <circle cx="5.600" cy=".3" r="1.050" fill="#2f58a8"/>
  </g>
</svg>
<span class="a tab" style="left:997px;top:682px;letter-spacing:-0.20px">Search</span>
<svg style="left:1060px;top:685px" width="10" height="4" viewBox="0 0 10 4"><rect x=".5" y=".5" width="9" height="3" fill="#fff" stroke="#000" stroke-width="1"/></svg>
<svg style="left:1088px;top:685px" width="10" height="10" viewBox="0 0 10 10"><rect x=".5" y=".5" width="9" height="9" fill="#fff" stroke="#000" stroke-width="1"/><path d="M1.500 2.500h7" stroke="#000" stroke-width="1"/></svg>

<!-- view toolbar -->
<svg style="left:1053px;top:716px" width="16" height="16" viewBox="0 0 16 16">
  <defs><linearGradient id="gImp" x1="0" y1="0" x2="0" y2="1"><stop offset="0" stop-color="#c9b98a"/><stop offset="1" stop-color="#7f95c8"/></linearGradient></defs>
  <path d="M4.500 1.500h7l3.200 3.200v9.800h-10.200z" fill="#f6f9fe" stroke="url(#gImp)" stroke-width="1"/>
  <path d="M11.500 1.500v3.200h3.200z" fill="#ece2c0" stroke="#c9b98a" stroke-width=".7"/>
  <path d="M9 4.500h2M10.500 6.700h3M11.500 8.700h1.500M10.500 10.700h3M8 12.700h4" stroke="#5f82c4" stroke-width="1"/>
  <path d="M.7 6.300h5.300v-2.500l5.300 4.700-5.300 4.700v-2.500h-5.300z" fill="url(#gGold)" stroke="#c58a12" stroke-width="1" stroke-linejoin="round"/>
</svg>
<svg style="left:1090px;top:717.800px" width="12" height="7" viewBox="0 0 12 7"><path d="M.2.200h11.200l-5.600 5.700z" fill="#0a0a0a"/><path d="M2.500 1.700h6.600l-3.300 3.200z" fill="#fff"/></svg>

<!-- list -->
<div class="a" style="left:20px;top:807px;width:161px;height:20px;background:#cde1fb;border-radius:2px"></div>
<svg style="left:24px;top:741px" width="14" height="14" viewBox="0 0 14 14"><use href="#snip"/></svg>
<span class="a ui" style="left:41px;top:740px">Painel com Abas</span>
<svg style="left:24px;top:764px" width="14" height="14" viewBox="0 0 14 14"><use href="#snip"/></svg>
<span class="a ui" style="left:41px;top:763px">Painel de Accordion / Collapse</span>
<svg style="left:24px;top:787px" width="14" height="14" viewBox="0 0 14 14"><use href="#snip"/></svg>
<span class="a ui" style="left:41px;top:786px">Dados para Tooltip</span>
<svg style="left:24px;top:810px" width="14" height="14" viewBox="0 0 14 14"><use href="#snip"/></svg>
<span class="a ui" style="left:41px;top:809px">Slot de um Layout</span>
<svg style="left:24px;top:833px" width="14" height="14" viewBox="0 0 14 14"><use href="#snip"/></svg>
<span class="a ui" style="left:41px;top:832px">Verificar se usuário está logado</span>

<!-- v scrollbar -->
<div class="a" style="left:1097px;top:737px;width:17px;height:119px;background:#f2f2f2"></div>
<div class="a sbv" style="left:1100px;top:738px;width:13px;height:115px"></div>
<div class="a trv" style="left:1100px;top:750px;width:13px;height:91px"></div>
<div class="a sbthumbv" style="left:1100px;top:810px;width:13px;height:31px"></div>
<div class="a aru dk" style="left:1103.400px;top:743.700px"></div>
<div class="a ard" style="left:1103.500px;top:845px"></div>
<div class="a grip-v" style="left:1104px;top:822px"></div>
<!--BOTTOM-CONTENT-E-->

<!-- ================= STATUS BAR ================= -->
<!--STATUS-S-->
<div class="a sep" style="left:834px;top:864.500px;height:22px"></div>
<!--STATUS-E-->

</body>
</html>
